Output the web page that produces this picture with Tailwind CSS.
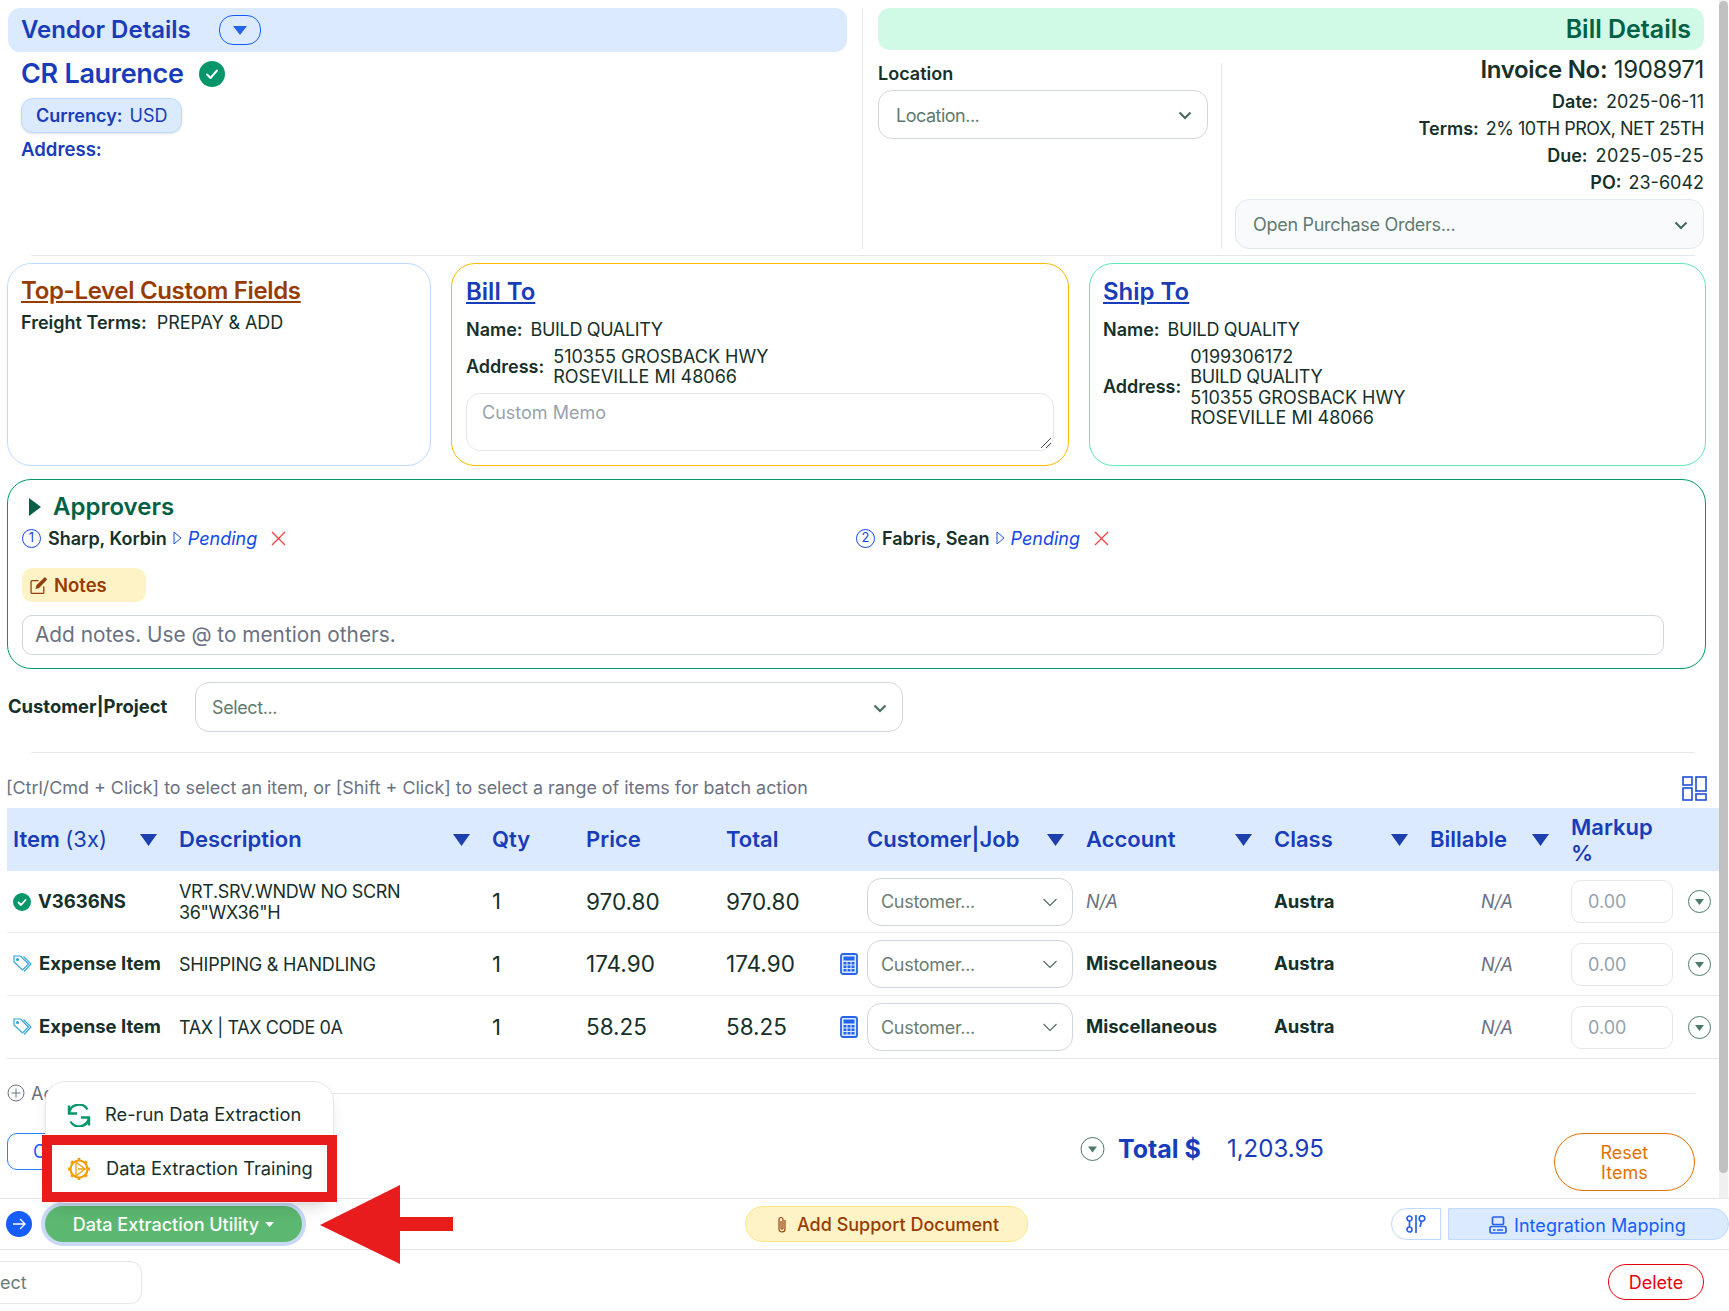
<!DOCTYPE html>
<html lang="en">
  <head>
    <meta charset="UTF-8" />
    <meta name="viewport" content="width=device-width, initial-scale=1.0" />
    <script src="https://cdn.jsdelivr.net/npm/@tailwindcss/browser@4"></script>
    <title>Bill Review</title>
  </head>
  <body class="bg-white font-['Inter',sans-serif] text-[18px] text-[#16302a]">
    <div class="relative w-[1729px] h-[1311px] overflow-hidden">
      <!-- scrolling area -->
      <div class="flex h-[1198px]">
        <div class="w-[1719px] h-[1198px] overflow-hidden">
          <!-- vendor + bill details -->
          <div class="flex h-[241px] mt-2 ml-2">
            <div class="w-[839px]">
              <div class="flex items-center h-[44px] pl-[13px] rounded-xl bg-blue-100">
                <h2 class="text-2xl font-semibold text-blue-800">Vendor Details</h2>
                <button class="flex items-center justify-center w-[42px] h-[30px] ml-[28px] rounded-[14px] border border-blue-600">
                  <svg width="14" height="9" viewBox="0 0 14 9"><path d="M0 0h14L7 9z" fill="#2563eb" /></svg>
                </button>
              </div>
              <div class="flex items-center mt-[5px] pl-[13px]">
                <h1 class="text-[27px] leading-[34px] tracking-[-0.3px] font-semibold text-blue-800">CR Laurence</h1>
                <svg class="ml-[15px] -mt-[1px]" width="26" height="26" viewBox="0 0 26 26"><circle cx="13" cy="13" r="13" fill="#059669" /><path d="M8 13.5l3.5 3.5L18 9.5" fill="none" stroke="#fff" stroke-width="2" stroke-linecap="round" stroke-linejoin="round" /></svg>
              </div>
              <div class="inline-flex items-center h-[35px] mt-[7px] ml-[13px] px-[14px] rounded-xl bg-blue-100 border border-blue-200 shadow text-blue-800">
                <b class="font-semibold mr-[7px]">Currency:</b> USD
              </div>
              <p class="mt-[3px] ml-[13px] font-semibold text-[18.6px] text-blue-800">Address:</p>
            </div>
            <div class="w-px ml-[15px] bg-gray-200"></div>
            <div class="w-[826px] ml-[15px]">
              <div class="flex items-center justify-end h-[42px] pt-[1px] pr-[13px] rounded-xl bg-emerald-100">
                <h2 class="text-[25px] font-semibold text-emerald-800">Bill Details</h2>
              </div>
              <div class="flex">
                <div class="w-[330px] mt-[11px]">
                  <label class="block font-semibold leading-[26px]">Location</label>
                  <div class="flex items-center justify-between h-[49px] mt-[3px] pl-[17px] pr-[14px] pt-[1px] rounded-[14px] border border-gray-300 text-[#5f7a70]">
                    <span class="tracking-[-0.5px]">Location...</span>
                    <svg width="16" height="16" viewBox="0 0 16 16"><path d="M2.5 5.5L8 11l5.5-5.5" fill="none" stroke="#4b6b60" stroke-width="2.2" /></svg>
                  </div>
                </div>
                <div class="w-px h-[186px] mt-[13px] ml-[13px] bg-gray-200"></div>
                <div class="w-[482px] text-right leading-[27px]">
                  <p class="mt-[5px] text-2xl leading-[30px] tracking-[-0.3px]"><b class="font-semibold">Invoice No:</b> 1908971</p>
                  <p class="mt-[3px]"><b class="font-semibold mr-[8px]">Date:</b>2025-06-11</p>
                  <p><b class="font-semibold mr-[7px]">Terms:</b><span class="tracking-[-0.5px]">2% 10TH PROX, NET 25TH</span></p>
                  <p><b class="font-semibold mr-[8px]">Due:</b><span class="tracking-[0.4px]">2025-05-25</span></p>
                  <p><b class="font-semibold mr-[7px]">PO:</b>23-6042</p>
                  <div class="flex items-center justify-between h-[50px] mt-[3px] ml-[13px] pl-[17px] pr-[14px] pt-[1px] rounded-[14px] border border-slate-200 bg-slate-50 text-left text-[#5f7a70]">
                    <span class="tracking-[-0.3px]">Open Purchase Orders...</span>
                    <svg width="16" height="16" viewBox="0 0 16 16"><path d="M2.5 5.5L8 11l5.5-5.5" fill="none" stroke="#4b6b60" stroke-width="2.2" /></svg>
                  </div>
                </div>
              </div>
            </div>
          </div>
          <div class="h-px w-[1664px] mt-[6px] ml-[31px] bg-gray-200"></div>

          <!-- cards -->
          <div class="flex h-[203px] mt-[7px] ml-[7px]">
            <div class="w-[424px] pt-[11px] pl-[13px] rounded-3xl border border-blue-200">
              <h3 class="text-2xl leading-[32px] tracking-[-0.33px] font-semibold text-amber-800 underline">Top-Level Custom Fields</h3>
              <p class="mt-[3px] leading-[26px]"><b class="font-semibold">Freight Terms:</b>&nbsp; <span class="tracking-[-0.1px]">PREPAY &amp; ADD</span></p>
            </div>
            <div class="w-[618px] ml-[20px] pt-[12px] px-[14px] rounded-3xl border border-amber-400">
              <h3 class="text-2xl leading-[32px] font-semibold text-blue-800 underline">Bill To</h3>
              <p class="mt-[9px] leading-[26px]"><b class="font-semibold mr-[8px]">Name:</b><span class="tracking-[-0.35px]">BUILD QUALITY</span></p>
              <div class="flex items-center mt-[4px] leading-[20px]">
                <b class="font-semibold mr-[9px]">Address:</b>
                <p>510355 GROSBACK HWY<br />ROSEVILLE MI 48066</p>
              </div>
              <div class="relative h-[58px] mt-[6px] pl-[15px] pt-[5px] rounded-[14px] border border-gray-200 text-gray-400">
                Custom Memo
                <svg class="absolute right-[1px] bottom-[1px]" width="12" height="12" viewBox="0 0 12 12"><path d="M11 1L1 11M11 6l-5 5" stroke="#444" stroke-width="1" /></svg>
              </div>
            </div>
            <div class="w-[617px] ml-[20px] pt-[12px] px-[13px] rounded-3xl border border-emerald-300">
              <h3 class="text-2xl leading-[32px] font-semibold text-blue-800 underline">Ship To</h3>
              <p class="mt-[9px] leading-[26px]"><b class="font-semibold mr-[8px]">Name:</b><span class="tracking-[-0.35px]">BUILD QUALITY</span></p>
              <div class="flex items-center mt-[4px] leading-[20.3px]">
                <b class="font-semibold mr-[9px]">Address:</b>
                <p>0199306172<br /><span class="tracking-[-0.35px]">BUILD QUALITY</span><br />510355 GROSBACK HWY<br />ROSEVILLE MI 48066</p>
              </div>
            </div>
          </div>

          <!-- approvers and notes -->
          <div class="w-[1699px] h-[190px] mt-[13px] ml-[7px] pt-[12px] pl-[14px] rounded-3xl border border-emerald-600">
            <div class="flex items-center h-[30px] pl-[7px]">
              <svg width="12" height="18" viewBox="0 0 12 18"><path d="M0 0l12 9L0 18z" fill="#065f46" /></svg>
              <h3 class="ml-[12px] text-2xl font-semibold text-emerald-800">Approvers</h3>
            </div>
            <div class="flex mt-[3px] h-[26px]">
              <div class="flex items-center w-[834px]">
                <span class="flex items-center justify-center w-[19px] h-[19px] rounded-full border border-blue-700 text-[13px] text-blue-700">1</span>
                <b class="ml-[7px] font-semibold">Sharp, Korbin</b>
                <svg class="ml-[6px]" width="9" height="14" viewBox="0 0 9 14"><path d="M1 1l7 6-7 6z" fill="none" stroke="#1d4ed8" /></svg>
                <i class="ml-[6px] text-blue-700">Pending</i>
                <svg class="ml-[14px]" width="15" height="15" viewBox="0 0 15 15"><path d="M1 1l13 13M14 1L1 14" stroke="#ef4444" stroke-width="1.3" /></svg>
              </div>
              <div class="flex items-center">
                <span class="flex items-center justify-center w-[19px] h-[19px] rounded-full border border-blue-700 text-[13px] text-blue-700">2</span>
                <b class="ml-[7px] font-semibold">Fabris, Sean</b>
                <svg class="ml-[6px]" width="9" height="14" viewBox="0 0 9 14"><path d="M1 1l7 6-7 6z" fill="none" stroke="#1d4ed8" /></svg>
                <i class="ml-[6px] text-blue-700">Pending</i>
                <svg class="ml-[14px]" width="15" height="15" viewBox="0 0 15 15"><path d="M1 1l13 13M14 1L1 14" stroke="#ef4444" stroke-width="1.3" /></svg>
              </div>
            </div>
            <div class="flex items-center w-[124px] h-[34px] mt-[17px] pl-[8px] pt-[1px] rounded-[10px] bg-amber-100 font-semibold text-amber-800">
              <svg width="17" height="17" viewBox="0 0 16 16" fill="none" stroke="#92400e" stroke-width="1.2"><path d="M13 9v5.5a1 1 0 0 1-1 1H2a1 1 0 0 1-1-1v-10a1 1 0 0 1 1-1h6" /><path d="M6 10.5l.6-2.4L14 .9l1.4 1.4L8.2 9.8z" fill="#92400e" /></svg>
              <span class="ml-[7px] text-[18.5px]">Notes</span>
            </div>
            <div class="flex items-center w-[1642px] h-[40px] mt-[13px] pl-[12px] rounded-[10px] border border-gray-300 text-[20.8px] text-gray-500">
              Add notes. Use @ to mention others.
            </div>
          </div>

          <!-- customer / project -->
          <div class="flex items-center h-[50px] mt-[13px] ml-2">
            <label class="w-[187px] font-bold text-[18.4px]">Customer|Project</label>
            <div class="flex items-center justify-between w-[708px] h-[50px] pl-[16px] pr-[14px] pt-[1px] rounded-[14px] border border-gray-300 text-[#5f7a70]">
              <span class="tracking-[-0.4px]">Select...</span>
              <svg width="16" height="16" viewBox="0 0 16 16"><path d="M2.5 5.5L8 11l5.5-5.5" fill="none" stroke="#4b6b60" stroke-width="2.2" /></svg>
            </div>
          </div>
          <div class="h-px w-[1664px] mt-[20px] ml-[31px] bg-gray-200"></div>

          <div class="flex items-center justify-between w-[1701px] h-[34px] mt-[18px] ml-[6px] text-gray-500">
            <p class="text-[17.9px]">[Ctrl/Cmd + Click] to select an item, or [Shift + Click] to select a range of items for batch action</p>
            <svg width="25" height="25" viewBox="0 0 25 25" fill="none" stroke="#1d4ed8" stroke-width="1.6"><rect x="1" y="1" width="9" height="8" /><rect x="14" y="1" width="10" height="14" /><rect x="1" y="12" width="9" height="12" /><rect x="14" y="18" width="10" height="6" /></svg>
          </div>

          <!-- line items -->
          <div class="ml-[7px] mt-[3px] w-[1712px]">
            <div class="grid grid-cols-[172px_313px_94px_140px_141px_219px_188px_156px_141px_148px] items-center h-[63px] bg-blue-100 text-[22px] font-semibold text-blue-800">
              <div class="flex items-center justify-between pl-[6px] pr-[22px]"><span>Item <span class="font-normal">(3x)</span></span><svg width="17" height="12" viewBox="0 0 17 12"><path d="M0 0h17L8.5 12z" fill="#1e40af" /></svg></div>
              <div class="flex items-center justify-between pr-[22px]"><span>Description</span><svg width="17" height="12" viewBox="0 0 17 12"><path d="M0 0h17L8.5 12z" fill="#1e40af" /></svg></div>
              <div>Qty</div>
              <div>Price</div>
              <div>Total</div>
              <div class="flex items-center justify-between pr-[22px]"><span>Customer|Job</span><svg width="17" height="12" viewBox="0 0 17 12"><path d="M0 0h17L8.5 12z" fill="#1e40af" /></svg></div>
              <div class="flex items-center justify-between pr-[22px]"><span>Account</span><svg width="17" height="12" viewBox="0 0 17 12"><path d="M0 0h17L8.5 12z" fill="#1e40af" /></svg></div>
              <div class="flex items-center justify-between pr-[22px]"><span>Class</span><svg width="17" height="12" viewBox="0 0 17 12"><path d="M0 0h17L8.5 12z" fill="#1e40af" /></svg></div>
              <div class="flex items-center justify-between pr-[22px]"><span>Billable</span><svg width="17" height="12" viewBox="0 0 17 12"><path d="M0 0h17L8.5 12z" fill="#1e40af" /></svg></div>
              <div class="leading-[26px]">Markup<br />%</div>
            </div>

            <div class="grid grid-cols-[172px_313px_94px_140px_141px_219px_188px_156px_141px_148px] items-center h-[62px] border-b border-gray-200">
              <div class="flex items-center pl-[6px] font-bold text-[18.5px]"><svg width="18" height="18" viewBox="0 0 18 18"><circle cx="9" cy="9" r="9" fill="#059669" /><path d="M5.5 9.5l2.5 2.5 4.500-5" fill="none" stroke="#fff" stroke-width="1.8" stroke-linecap="round" stroke-linejoin="round" /></svg><span class="ml-[7px]">V3636NS</span></div>
              <div class="leading-[21px] tracking-[-0.35px]">VRT.SRV.WNDW NO SCRN<br />36"WX36"H</div>
              <div class="text-[22px]">1</div>
              <div class="text-[22.5px]">970.80</div>
              <div class="text-[22.5px]">970.80</div>
              <div class="flex items-center justify-between w-[206px] h-[48px] pl-[13px] pr-[14px] rounded-[14px] border border-gray-300 text-[#6b7d76]"><span class="tracking-[-0.3px]">Customer...</span><svg width="16" height="16" viewBox="0 0 16 16"><path d="M1.5 5L8 11.5 14.5 5" fill="none" stroke="#4b6b60" stroke-width="1.1" /></svg></div>
              <div class="italic text-gray-500">N/A</div>
              <div class="font-bold text-[18.5px]">Austra</div>
              <div class="pr-[58px] text-right italic text-gray-500">N/A</div>
              <div class="flex items-center">
                <div class="flex items-center w-[102px] h-[43px] pl-[16px] rounded-[10px] border border-gray-200 text-gray-400">0.00</div>
                <svg class="ml-[14px]" width="25" height="23" viewBox="0 0 25 23"><circle cx="12.500" cy="11.500" r="11" fill="none" stroke="#4b7a6a" /><path d="M8 9h9l-4.500 6z" fill="#4b7a6a" /></svg>
              </div>
            </div>

            <div class="grid grid-cols-[172px_313px_94px_140px_141px_219px_188px_156px_141px_148px] items-center h-[63px] border-b border-gray-200">
              <div class="flex items-center pl-[6px] font-bold text-[18.5px]">
                <svg width="19" height="18" viewBox="0 0 19 18" fill="none" stroke="#38a5d8" stroke-width="1.2"><path d="M1 1h6.500l8 8-6 6-8.500-8z" /><path d="M10.500 1.500l7.500 7.500-7 7.500" /><circle cx="4.500" cy="4.500" r="1" fill="#38a5d8" /></svg>
                <span class="ml-[7px]">Expense Item</span>
              </div>
              <div class="tracking-[-0.2px]">SHIPPING &amp; HANDLING</div>
              <div class="text-[22px]">1</div>
              <div class="text-[22.5px]">174.90</div>
              <div class="flex items-center justify-between pr-[9px] text-[22.5px]">
                <span>174.90</span>
                <svg width="18" height="22" viewBox="0 0 18 22"><rect x="1" y="1" width="16" height="20" rx="2" fill="#dbeafe" stroke="#2563eb" stroke-width="1.800" /><rect x="3.500" y="3.500" width="11" height="4" fill="#2563eb" /><path d="M3.500 9h3v2.500h-3zM7.500 9h3v2.500h-3zM11.500 9h3v2.500h-3zM3.500 12.500h3V15h-3zM7.500 12.500h3V15h-3zM11.500 12.500h3V15h-3zM3.500 16h3v2.500h-3zM7.500 16h3v2.500h-3zM11.500 16h3v2.500h-3z" fill="#2563eb" /></svg>
              </div>
              <div class="flex items-center justify-between w-[206px] h-[48px] pl-[13px] pr-[14px] rounded-[14px] border border-gray-300 text-[#6b7d76]"><span class="tracking-[-0.3px]">Customer...</span><svg width="16" height="16" viewBox="0 0 16 16"><path d="M1.5 5L8 11.5 14.5 5" fill="none" stroke="#4b6b60" stroke-width="1.1" /></svg></div>
              <div class="font-bold text-[18.5px]">Miscellaneous</div>
              <div class="font-bold text-[18.5px]">Austra</div>
              <div class="pr-[58px] text-right italic text-gray-500">N/A</div>
              <div class="flex items-center">
                <div class="flex items-center w-[102px] h-[43px] pl-[16px] rounded-[10px] border border-gray-200 text-gray-400">0.00</div>
                <svg class="ml-[14px]" width="25" height="23" viewBox="0 0 25 23"><circle cx="12.500" cy="11.500" r="11" fill="none" stroke="#4b7a6a" /><path d="M8 9h9l-4.500 6z" fill="#4b7a6a" /></svg>
              </div>
            </div>

            <div class="grid grid-cols-[172px_313px_94px_140px_141px_219px_188px_156px_141px_148px] items-center h-[63px] border-b border-gray-200">
              <div class="flex items-center pl-[6px] font-bold text-[18.5px]">
                <svg width="19" height="18" viewBox="0 0 19 18" fill="none" stroke="#38a5d8" stroke-width="1.2"><path d="M1 1h6.500l8 8-6 6-8.500-8z" /><path d="M10.500 1.500l7.500 7.500-7 7.500" /><circle cx="4.500" cy="4.500" r="1" fill="#38a5d8" /></svg>
                <span class="ml-[7px]">Expense Item</span>
              </div>
              <div class="tracking-[-0.4px]">TAX | TAX CODE 0A</div>
              <div class="text-[22px]">1</div>
              <div class="text-[22.5px]">58.25</div>
              <div class="flex items-center justify-between pr-[9px] text-[22.5px]">
                <span>58.25</span>
                <svg width="18" height="22" viewBox="0 0 18 22"><rect x="1" y="1" width="16" height="20" rx="2" fill="#dbeafe" stroke="#2563eb" stroke-width="1.800" /><rect x="3.500" y="3.500" width="11" height="4" fill="#2563eb" /><path d="M3.500 9h3v2.500h-3zM7.500 9h3v2.500h-3zM11.500 9h3v2.500h-3zM3.500 12.500h3V15h-3zM7.500 12.500h3V15h-3zM11.500 12.500h3V15h-3zM3.500 16h3v2.500h-3zM7.500 16h3v2.500h-3zM11.500 16h3v2.500h-3z" fill="#2563eb" /></svg>
              </div>
              <div class="flex items-center justify-between w-[206px] h-[48px] pl-[13px] pr-[14px] rounded-[14px] border border-gray-300 text-[#6b7d76]"><span class="tracking-[-0.3px]">Customer...</span><svg width="16" height="16" viewBox="0 0 16 16"><path d="M1.5 5L8 11.5 14.5 5" fill="none" stroke="#4b6b60" stroke-width="1.1" /></svg></div>
              <div class="font-bold text-[18.5px]">Miscellaneous</div>
              <div class="font-bold text-[18.5px]">Austra</div>
              <div class="pr-[58px] text-right italic text-gray-500">N/A</div>
              <div class="flex items-center">
                <div class="flex items-center w-[102px] h-[43px] pl-[16px] rounded-[10px] border border-gray-200 text-gray-400">0.00</div>
                <svg class="ml-[14px]" width="25" height="23" viewBox="0 0 25 23"><circle cx="12.500" cy="11.500" r="11" fill="none" stroke="#4b7a6a" /><path d="M8 9h9l-4.500 6z" fill="#4b7a6a" /></svg>
              </div>
            </div>
          </div>

          <!-- add row -->
          <div class="flex items-center w-[1688px] h-[24px] mt-[22px] ml-[7px] text-gray-500">
            <svg width="18" height="18" viewBox="0 0 18 18" fill="none" stroke="#6b7280"><circle cx="9" cy="9" r="8" /><path d="M9 4.500v9M4.500 9h9" /></svg>
            <span class="ml-[6px]">Add Item</span>
            <div class="flex-1 h-px ml-[8px] bg-gray-200"></div>
          </div>

          <!-- totals -->
          <div class="flex items-start h-[58px] mt-[28px] ml-[7px]">
            <button class="w-[100px] h-[37px] pl-[25px] rounded-[10px] border border-blue-500 text-left text-blue-600">Code</button>
            <svg class="mt-[4px] ml-[973px]" width="25" height="24" viewBox="0 0 25 24"><circle cx="12.500" cy="12" r="11.500" fill="none" stroke="#4b7a6a" /><path d="M8 9.500h9l-4.500 6z" fill="#4b7a6a" /></svg>
            <b class="ml-[13px] text-[25px] leading-[32px] font-bold text-blue-800">Total $</b>
            <span class="ml-[26px] text-2xl leading-[32px] text-blue-800">1,203.95</span>
            <button class="w-[141px] h-[58px] ml-[230px] pt-[1px] rounded-full border border-amber-600 leading-[20px] text-amber-600">Reset<br />Items</button>
          </div>
        </div>
        <!-- scrollbar -->
        <div class="w-[9px] h-[1198px] bg-[#f0f0f0]">
          <div class="h-[1172px] mt-px rounded-full bg-[#c1c1c1]"></div>
        </div>
      </div>

      <!-- action bar -->
      <div class="flex items-center h-[52px] border-y border-gray-200">
        <button class="flex items-center justify-center w-[26px] h-[26px] ml-[6px] rounded-full bg-blue-600">
          <svg width="16" height="16" viewBox="0 0 16 16" fill="none" stroke="#fff" stroke-width="1.400"><path d="M2 8h12M9 3l5 5-5 5" /></svg>
        </button>
        <button class="flex items-center justify-center w-[257px] h-[36px] ml-[13px] rounded-full bg-[#5cb870] ring-4 ring-[#c9d8f5] font-medium text-white">
          Data Extraction Utility
          <svg class="ml-[6px]" width="9" height="5" viewBox="0 0 9 5"><path d="M0 0h9L4.500 5z" fill="#fff" /></svg>
        </button>
        <button class="flex items-center justify-center w-[283px] h-[36px] ml-[443px] pl-[3px] rounded-full bg-amber-100 border border-amber-200 font-medium text-amber-800">
          <svg width="10" height="17" viewBox="0 0 10 17" fill="none" stroke="#92400e" stroke-width="1.200"><path d="M8 4v9a3 3 0 0 1-6 0V3.500a2 2 0 0 1 4 0V12a1 1 0 0 1-2 0V5" /></svg>
          <span class="ml-[10px]">Add Support Document</span>
        </button>
        <button class="flex items-center justify-center w-[50px] h-[32px] ml-[363px] rounded-l-2xl border border-blue-200">
          <svg width="20" height="18" viewBox="0 0 20 18" fill="none" stroke="#2563eb" stroke-width="1.700"><circle cx="3.500" cy="3.500" r="2.500" /><path d="M3.500 6v6" /><circle cx="3.500" cy="14.500" r="2.500" /><path d="M10 0v18" /><circle cx="16" cy="3.500" r="2.800" /><path d="M15.500 6.500L14 12" /></svg>
        </button>
        <button class="flex items-center w-[281px] h-[32px] ml-[7px] pl-[40px] pt-[2px] rounded-r-2xl bg-blue-100 border border-blue-200 text-blue-600">
          <svg width="18" height="18" viewBox="0 0 18 18" fill="none" stroke="#2563eb" stroke-width="1.700"><rect x="3.500" y="1" width="11" height="7.500" rx="1" /><rect x="1" y="10.500" width="16" height="6.500" rx="1.500" /><path d="M4 14h2.500M8 14h6" /></svg>
          <span class="ml-[7px] tracking-[0.05px]">Integration Mapping</span>
        </button>
      </div>

      <!-- submit bar -->
      <div class="flex items-center justify-between h-[61px] pt-[3px] pr-[25px]">
        <div class="flex items-center w-[142px] h-[43px] pl-0 rounded-r-xl border-y border-r border-gray-200 text-[#6b7d76]">ect</div>
        <button class="w-[96px] h-[36px] rounded-full border border-red-600 text-red-600">Delete</button>
      </div>

      <!-- dropdown menu -->
      <div class="absolute left-[45px] top-[1081px] w-[289px] h-[122px] pt-[6px] rounded-[20px] bg-white border border-gray-200 shadow-lg text-[18.3px]">
        <div class="flex items-center h-[54px] pl-[21px]">
          <svg width="24" height="23" viewBox="0 0 24 23" fill="none" stroke="#059669" stroke-width="2.400"><path d="M2 9.500a10 10 0 0 1 18.500-4" /><path d="M2 1.500v8h8" /><path d="M22 13.500a10 10 0 0 1-18.500 4" /><path d="M22 21.500v-8h-8" /></svg>
          <span class="ml-[14px]">Re-run Data Extraction</span>
        </div>
        <div class="flex items-center h-[54px] pl-[21px]">
          <svg width="24" height="24" viewBox="0 0 24 24" fill="none" stroke="#f59e0b"><circle cx="12" cy="12" r="8.500" stroke-width="2.200" /><path d="M12 1v3M12 20v3M1 12h3M20 12h3M4.200 4.200l2.100 2.100M17.700 17.700l2.100 2.100M4.200 19.800l2.100-2.100M17.700 6.300l2.100-2.100" stroke-width="2.800" /><path d="M9 5v14M9 5l9 7-9 7M18 12h-7" stroke-width="1.300" /></svg>
          <span class="ml-[15px]">Data Extraction Training</span>
        </div>
      </div>

      <!-- red annotation -->
      <div class="absolute left-[42px] top-[1135px] w-[295px] h-[67px] border-[10px] border-[#e81c1c]"></div>
      <svg class="absolute left-[320px] top-[1185px]" width="133" height="79" viewBox="0 0 133 79"><path d="M0 40L80 0v32h53v14H80v33z" fill="#e81c1c" /></svg>
    </div>
  </body>
</html>
